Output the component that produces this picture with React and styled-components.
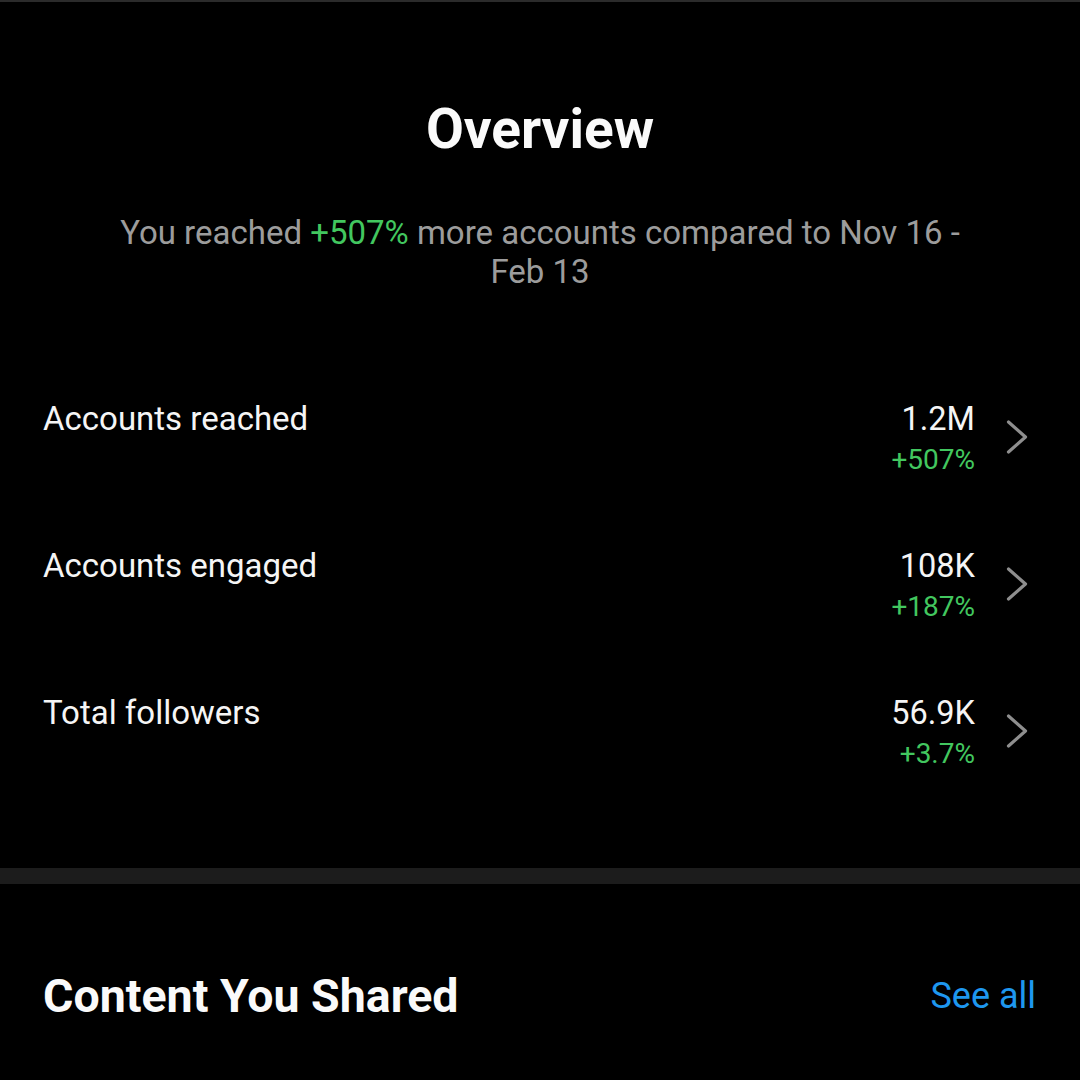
import React from 'react'
import styled, { createGlobalStyle } from 'styled-components'

const GlobalStyle = createGlobalStyle`
  body {
    margin: 0;
    background: #000;
    font-family: Roboto, "Liberation Sans", sans-serif;
    -webkit-font-smoothing: antialiased;
  }
`

const Page = styled.div`
  width: 1080px;
  height: 1080px;
  overflow: hidden;
  background: #000;
  color: #f5f5f5;
  display: flex;
  flex-direction: column;
`

const TopEdge = styled.div`
  height: 2px;
  background: #2b2b2b;
`

const Header = styled.header`
  display: flex;
  flex-direction: column;
  align-items: center;
  padding: 97px 110px 0;
`

const Title = styled.h1`
  margin: 0;
  font-size: 55px;
  line-height: 60px;
  font-weight: 700;
  color: #fafafa;
`

const Summary = styled.p`
  margin: 54px 0 0;
  font-size: 33px;
  line-height: 39px;
  color: #9c9c9c;
  text-align: center;
`

const Green = styled.span`
  color: #42c75f;
`

const List = styled.ul`
  list-style: none;
  margin: 108px 0 0;
  padding: 0;
`

const Row = styled.li`
  height: 147px;
  display: flex;
  align-items: flex-start;
  padding: 0 52px 0 43px;
`

const Label = styled.span`
  flex-grow: 1;
  font-size: 33px;
  line-height: 40px;
  color: #f5f5f5;
`

const Numbers = styled.div`
  display: flex;
  flex-direction: column;
  align-items: flex-end;
`

const Value = styled.span`
  font-size: 32.5px;
  line-height: 40px;
  color: #f5f5f5;
`

const Change = styled.span`
  font-size: 28px;
  line-height: 42px;
  color: #42c75f;
`

const Chevron = styled.svg`
  margin: 21px 0 0 31px;
  flex-shrink: 0;
`

const Divider = styled.div`
  margin-top: 28px;
  height: 16px;
  background: #1c1c1c;
`

const SectionHead = styled.div`
  margin-top: 82px;
  display: flex;
  align-items: center;
  justify-content: space-between;
  padding: 0 44px 0 43px;
  height: 60px;
`

const SectionTitle = styled.h2`
  margin: 0;
  font-size: 46.5px;
  font-weight: 700;
  color: #fafafa;
`

const SeeAll = styled.a`
  font-size: 36px;
  color: #1e97ef;
  text-decoration: none;
`

const stats = [
  { label: 'Accounts reached', value: '1.2M', change: '+507%' },
  { label: 'Accounts engaged', value: '108K', change: '+187%' },
  { label: 'Total followers', value: '56.9K', change: '+3.7%' },
]

const ChevronIcon = () => (
  <Chevron width="22" height="34" viewBox="0 0 22 34" fill="none">
    <polyline
      points="2.5,2 19.5,17 2.5,32"
      stroke="#8e8e8e"
      strokeWidth="3.2"
      strokeLinecap="round"
      strokeLinejoin="round"
    />
  </Chevron>
)

export default function App() {
  return (
    <Page>
      <GlobalStyle />
      <TopEdge />
      <Header>
        <Title>Overview</Title>
        <Summary>
          You reached <Green>+507%</Green> more accounts compared to Nov 16 -
          Feb 13
        </Summary>
      </Header>
      <List>
        {stats.map((s) => (
          <Row key={s.label}>
            <Label>{s.label}</Label>
            <Numbers>
              <Value>{s.value}</Value>
              <Change>{s.change}</Change>
            </Numbers>
            <ChevronIcon />
          </Row>
        ))}
      </List>
      <Divider />
      <SectionHead>
        <SectionTitle>Content You Shared</SectionTitle>
        <SeeAll href="#">See all</SeeAll>
      </SectionHead>
    </Page>
  )
}
